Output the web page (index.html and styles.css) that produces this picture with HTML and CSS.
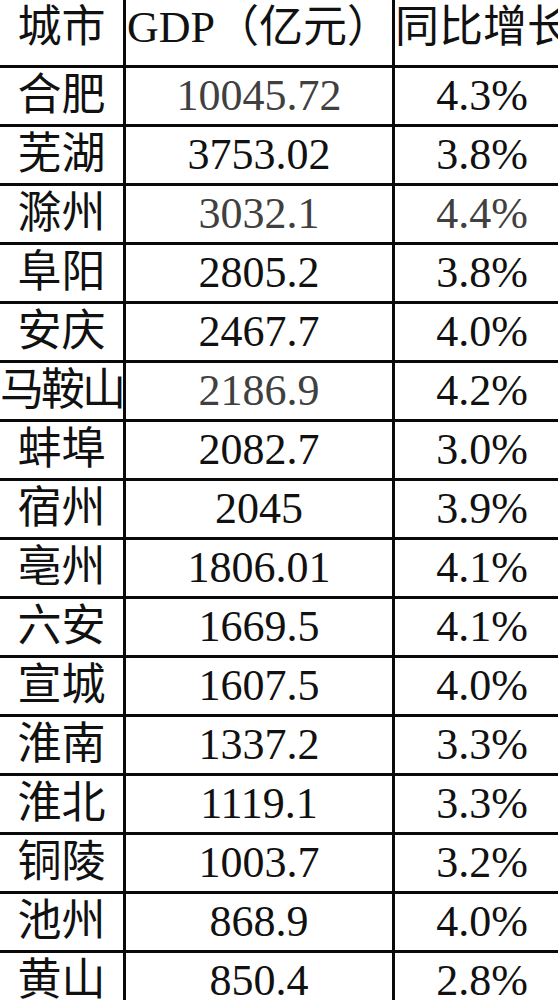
FILE: index.html
```html
<!DOCTYPE html>
<html lang="zh-CN">
<head>
<meta charset="utf-8">
<title>城市GDP</title>
<link rel="stylesheet" href="styles.css">
</head>
<body>
<div class="table">
  <div class="cell head">城市</div><div class="cell head">GDP（亿元）</div><div class="cell head">同比增长</div>
  <div class="cell">合肥</div><div class="cell grey">10045.72</div><div class="cell">4.3%</div>
  <div class="cell">芜湖</div><div class="cell">3753.02</div><div class="cell">3.8%</div>
  <div class="cell">滁州</div><div class="cell grey">3032.1</div><div class="cell grey">4.4%</div>
  <div class="cell">阜阳</div><div class="cell">2805.2</div><div class="cell">3.8%</div>
  <div class="cell">安庆</div><div class="cell">2467.7</div><div class="cell">4.0%</div>
  <div class="cell tight">马鞍山</div><div class="cell grey">2186.9</div><div class="cell">4.2%</div>
  <div class="cell">蚌埠</div><div class="cell">2082.7</div><div class="cell">3.0%</div>
  <div class="cell">宿州</div><div class="cell">2045</div><div class="cell">3.9%</div>
  <div class="cell">亳州</div><div class="cell">1806.01</div><div class="cell">4.1%</div>
  <div class="cell">六安</div><div class="cell">1669.5</div><div class="cell">4.1%</div>
  <div class="cell">宣城</div><div class="cell">1607.5</div><div class="cell">4.0%</div>
  <div class="cell">淮南</div><div class="cell">1337.2</div><div class="cell">3.3%</div>
  <div class="cell">淮北</div><div class="cell">1119.1</div><div class="cell">3.3%</div>
  <div class="cell">铜陵</div><div class="cell">1003.7</div><div class="cell">3.2%</div>
  <div class="cell">池州</div><div class="cell">868.9</div><div class="cell">4.0%</div>
  <div class="cell">黄山</div><div class="cell">850.4</div><div class="cell">2.8%</div>
</div>
</body>
</html>
```
FILE: styles.css
```css
html, body {
  margin: 0;
  padding: 0;
  background: #fff;
  overflow: hidden;
}

.table {
  display: grid;
  grid-template-columns: 123px 266px 174px;
  grid-template-rows: 65px;
  grid-auto-rows: 56px;
  gap: 3px;
  width: 569px;
  background: #0a0a0a;
  font-family: "Liberation Serif", "Noto Sans CJK SC", serif;
  font-size: 44px;
  color: #111;
}

.cell {
  background: #fff;
  text-align: center;
  line-height: 56px;
  white-space: nowrap;
  overflow: visible;
}

.head {
  line-height: 56px;
}

.grey {
  color: #404040;
}

.tight {
  letter-spacing: -3px;
}
```
